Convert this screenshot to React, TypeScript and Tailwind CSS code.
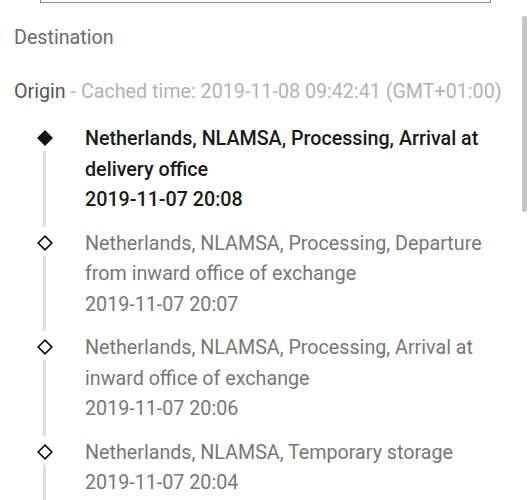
import React from "react";

type Item = { text: string; time: string; active?: boolean };

const items: Item[] = [
  { text: "Netherlands, NLAMSA, Processing, Arrival at delivery office", time: "2019-11-07 20:08", active: true },
  { text: "Netherlands, NLAMSA, Processing, Departure from inward office of exchange", time: "2019-11-07 20:07" },
  { text: "Netherlands, NLAMSA, Processing, Arrival at inward office of exchange", time: "2019-11-07 20:06" },
  { text: "Netherlands, NLAMSA, Temporary storage", time: "2019-11-07 20:04" },
];

function Diamond({ filled }: { filled?: boolean }) {
  return (
    <svg width="18" height="18" viewBox="0 0 18 18" className="block">
      {filled ? (
        <polygon points="9,1 17,9 9,17 1,9" fill="#111" />
      ) : (
        <polygon points="9,2.2 15.8,9 9,15.8 2.2,9" fill="#fff" stroke="#111" strokeWidth="1.7" />
      )}
    </svg>
  );
}

export default function App() {
  return (
    <div
      className="relative w-[530px] h-[500px] overflow-hidden bg-white"
      style={{ fontFamily: "Roboto, 'Noto Sans', sans-serif" }}
    >
      <div className="ml-[40px] w-[451px] h-[3px] border-x border-b border-[#8a8a8a]" />
      <div className="px-[14px] text-[19.7px] leading-[30.5px]">
        <div className="mt-[20px] text-[#6b6b6b]">Destination</div>
        <div className="mt-[23px]">
          <span className="text-[#555]">Origin</span>
          <span className="text-[#b3b3b3]"> - Cached time: 2019-11-08 09:42:41 (GMT+01:00)</span>
        </div>
        <div className="mt-[17px] flex flex-col">
          {items.map((it, i) => (
            <div key={i} className="flex">
              <div className="w-[71px] flex flex-col items-center pl-[2px] pr-[12px] pt-[5px]">
                <Diamond filled={it.active} />
                <div className="mt-[4px] w-[3px] flex-1 bg-[#dedede] mb-[2px]" />
              </div>
              <div
                className={
                  "flex-1 pb-[13px] pr-[30px] " +
                  (it.active ? "text-[#1a1a1a] font-medium" : "text-[#777]")
                }
              >
                <div>{it.text}</div>
                <div>{it.time}</div>
              </div>
            </div>
          ))}
        </div>
      </div>
      <div className="absolute left-[522px] top-[16px] w-[5px] h-[196px] rounded-full bg-[#c6c6c6]" />
    </div>
  );
}
